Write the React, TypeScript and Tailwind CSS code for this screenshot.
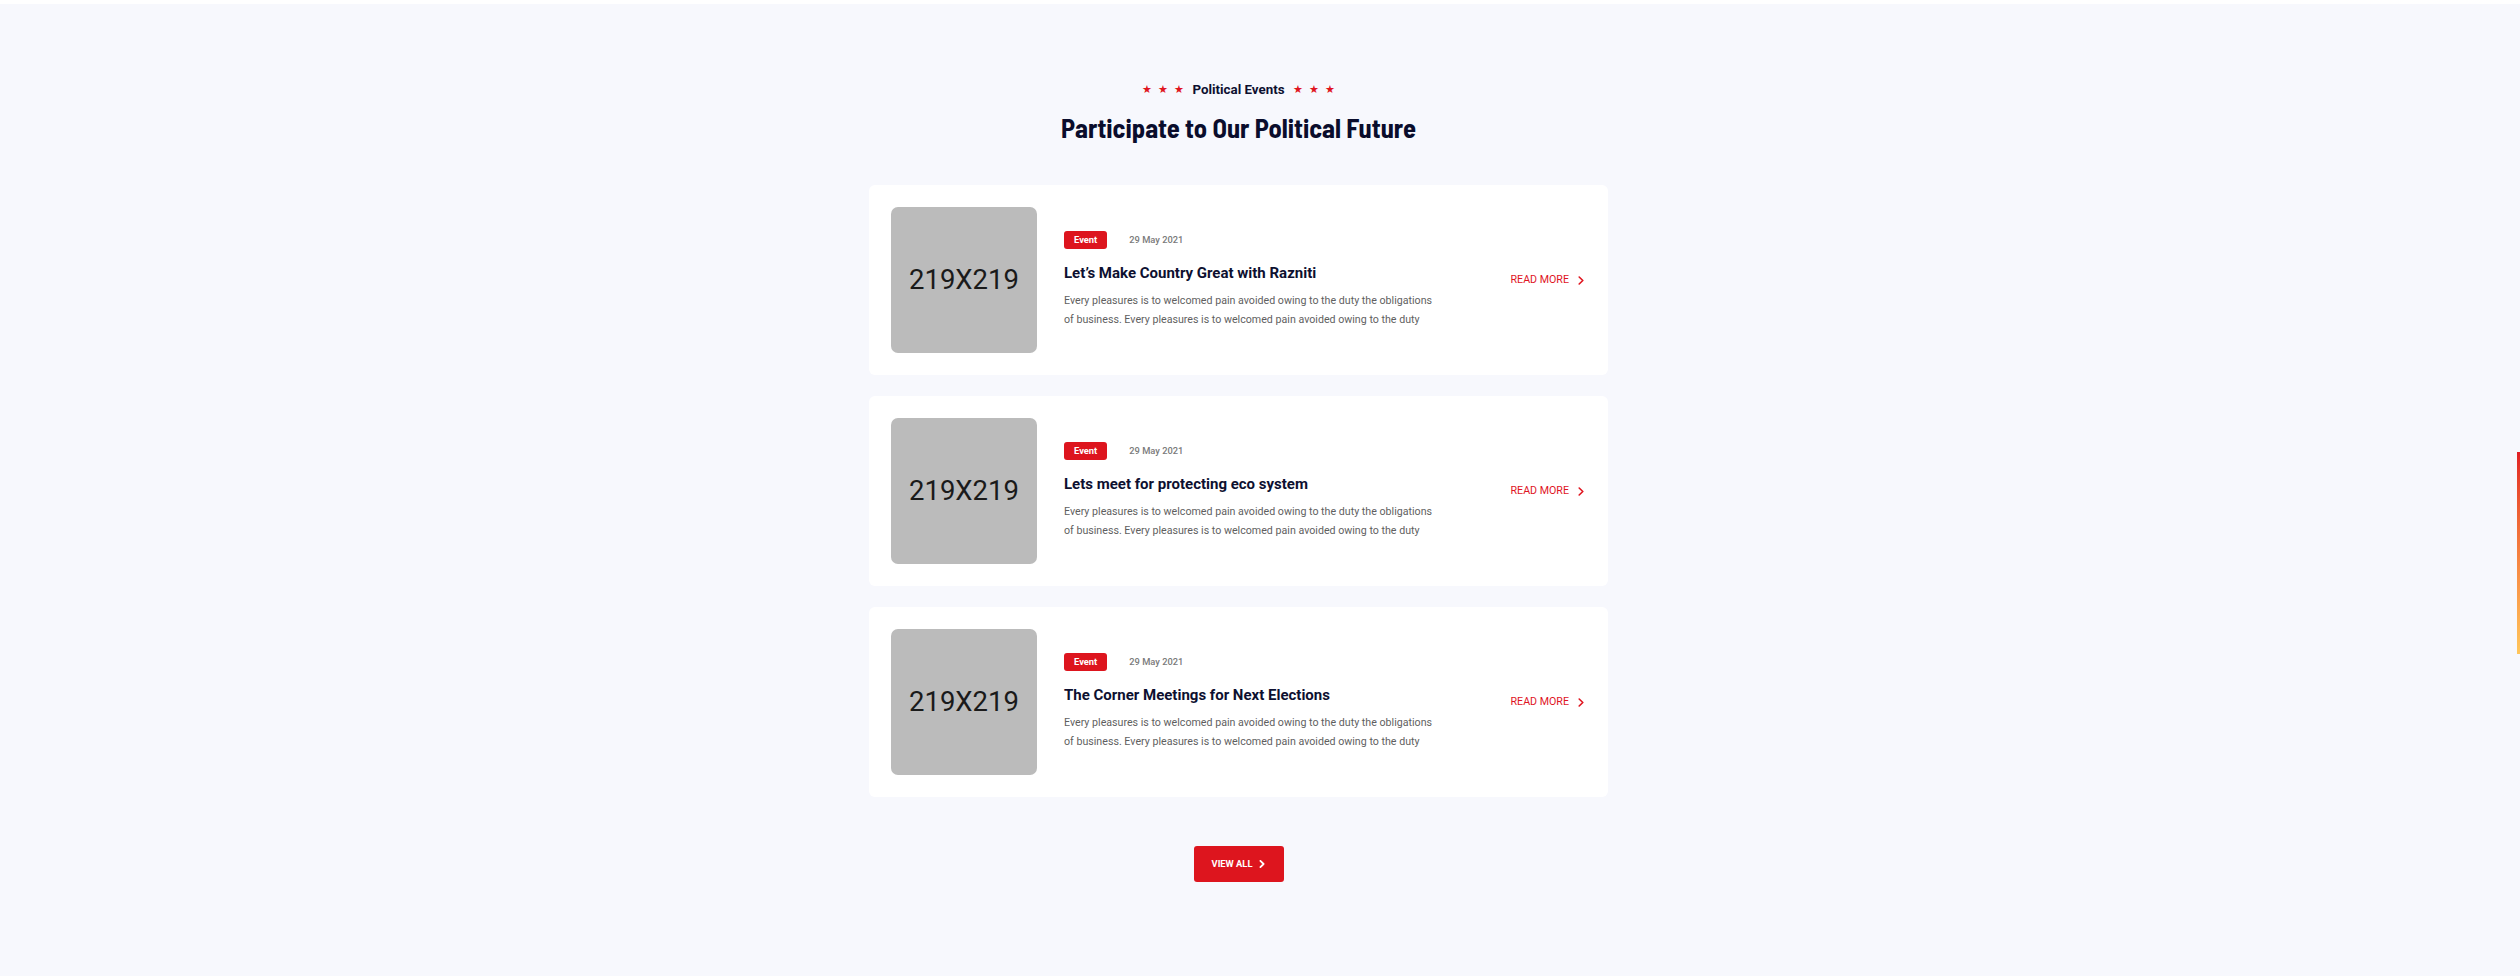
import React from "react";

const events = [
  { title: "Let\u2019s Make Country Great with Razniti" },
  { title: "Lets meet for protecting eco system" },
  { title: "The Corner Meetings for Next Elections" },
];

function Chevron({ className }: { className?: string }) {
  return (
    <svg viewBox="0 0 6 9" className={className} fill="none" stroke="currentColor" strokeLinecap="round" strokeLinejoin="round">
      <polyline points="1.2,1 4.8,4.5 1.2,8" />
    </svg>
  );
}

function Stars() {
  return (
    <span className="flex items-center gap-[6px] text-[10.5px] leading-none text-[#e0151f]">
      <span>★</span>
      <span>★</span>
      <span>★</span>
    </span>
  );
}

function Card({ title }: { title: string }) {
  return (
    <div className="flex items-center h-[190px] bg-white rounded-[6px] pl-[22px] pr-[24px]">
      <div className="w-[146px] h-[146px] shrink-0 rounded-[7px] bg-[#bbbbbb] flex items-center justify-center text-[27.5px] text-[#1a1a1a]">
        219X219
      </div>
      <div className="flex-1 ml-[27px] flex flex-col">
        <div className="flex items-center">
          <span className="h-[18px] px-[10px] rounded-[3px] bg-[#dd151e] text-white text-[9.33px] font-bold flex items-center">
            Event
          </span>
          <span className="ml-[22px] text-[9.33px] font-medium text-[#7a7a7a]">29 May 2021</span>
        </div>
        <h3 className="mt-[14px] text-[15px] leading-[20px] font-bold text-[#0d1030]">{title}</h3>
        <p className="mt-[8px] text-[10.67px] leading-[19.2px] text-[#5f5f5f]">
          Every pleasures is to welcomed pain avoided owing to the duty the obligations
          <br />
          of business. Every pleasures is to welcomed pain avoided owing to the duty
        </p>
      </div>
      <a className="flex items-center gap-[9px] text-[10.67px] text-[#e0151f] uppercase">
        READ MORE
        <Chevron className="w-[6px] h-[9px] stroke-[1.6]" />
      </a>
    </div>
  );
}

export default function App() {
  return (
    <div className="relative min-h-[976px] bg-[#f7f8fd] font-['Roboto',sans-serif]">
      <div className="h-[4px] bg-white" />
      <div className="pr-[43px] flex flex-col items-center pt-[76px]">
        <div className="flex items-center h-[20px]">
          <Stars />
          <span className="mx-[8px] text-[13.33px] font-bold text-[#0d1030]">Political Events</span>
          <Stars />
        </div>
        <h2 className="mt-[9px] text-[26.5px] leading-[36px] font-bold text-[#0a0d2c] font-['Barlow_Semi_Condensed','Barlow',sans-serif]">
          Participate to Our Political Future
        </h2>
        <div className="mt-[40px] w-[739px] flex flex-col gap-[21px]">
          {events.map((e) => (
            <Card key={e.title} title={e.title} />
          ))}
        </div>
        <button className="mt-[49px] w-[90px] h-[36px] rounded-[3px] bg-[#dd151e] text-white text-[9.33px] font-bold uppercase flex items-center justify-center gap-[7px]">
          VIEW ALL
          <Chevron className="w-[6px] h-[8px] stroke-[2]" />
        </button>
      </div>
      <div className="absolute right-0 top-[452px] w-[3px] h-[202px] bg-gradient-to-b from-[#e11d24] to-[#ffc65c]" />
    </div>
  );
}
